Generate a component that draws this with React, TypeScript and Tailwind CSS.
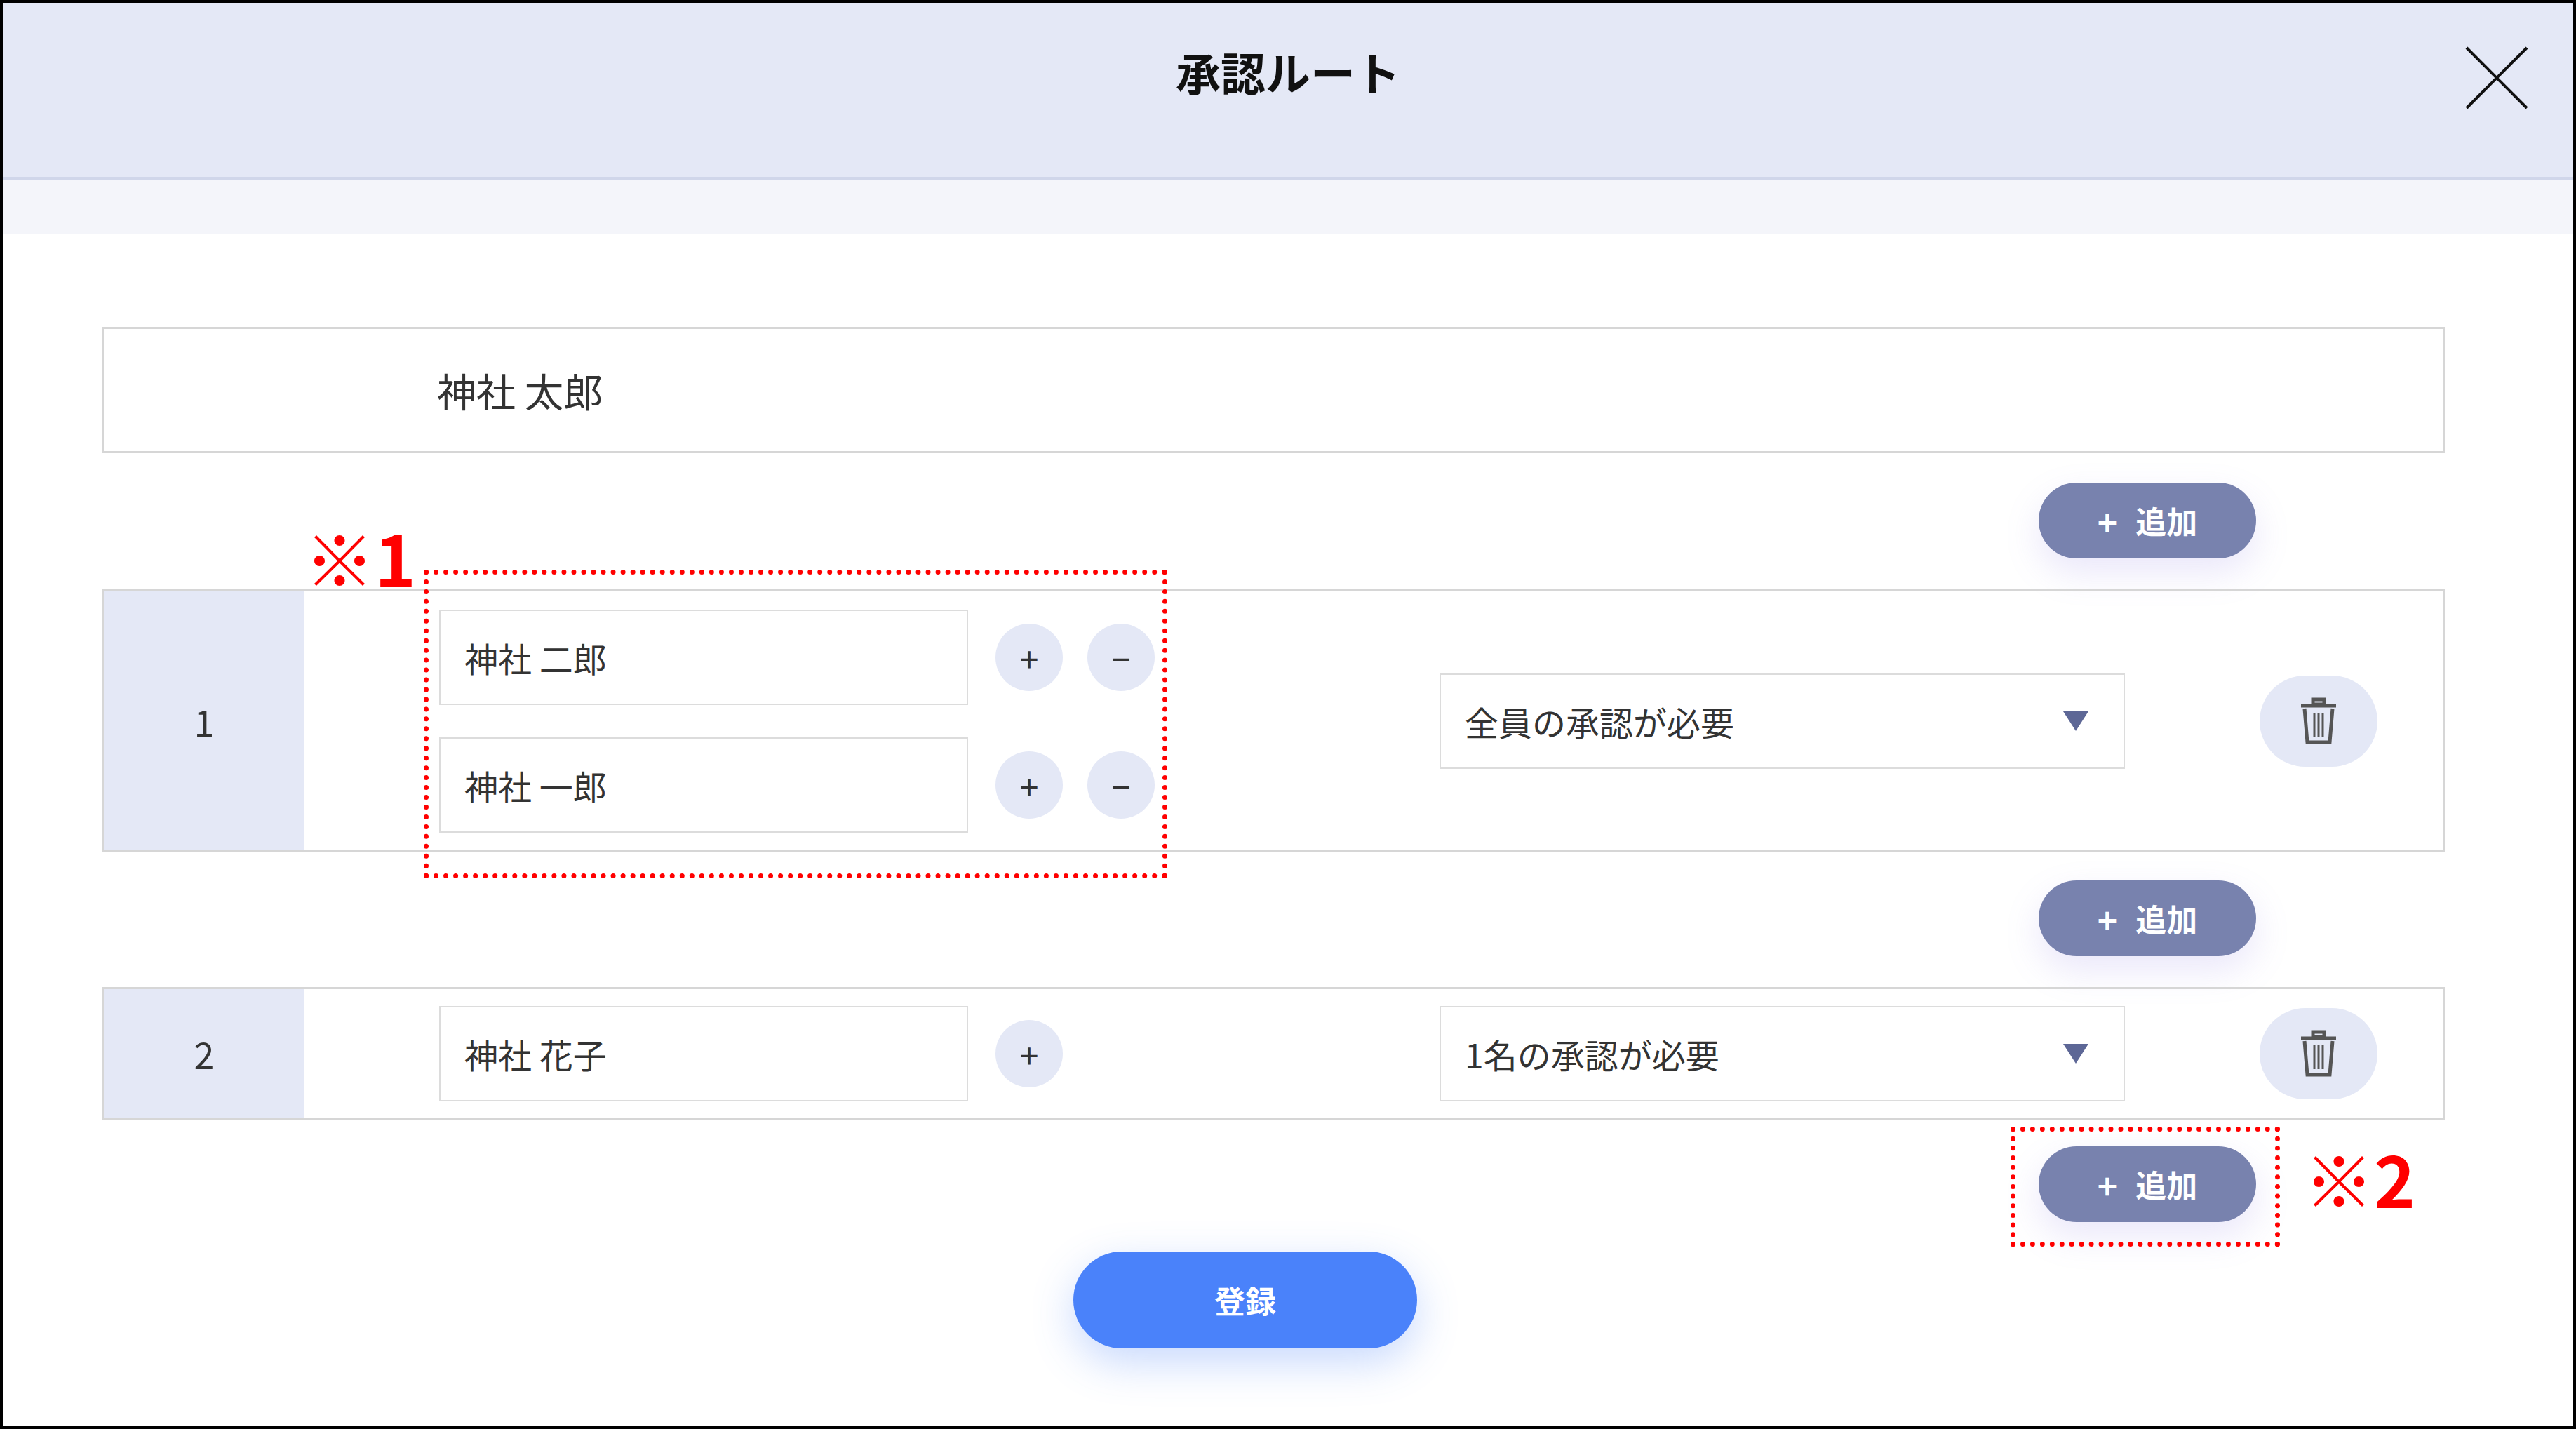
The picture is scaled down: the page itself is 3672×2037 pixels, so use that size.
import React from "react";

const F = { fontFamily: '"Noto Sans CJK JP", "Noto Sans", sans-serif' };

function AddBtn() {
  return (
    <div className="flex justify-end pr-[269px]">
      <div className="w-[310px] h-[108px] rounded-full bg-[#7882ae] text-white font-bold text-[44px] flex items-center justify-center gap-[26px] shadow-[0_20px_50px_rgba(140,120,230,0.18)]">
        <span className="text-[48px]">+</span>
        <span>追加</span>
      </div>
    </div>
  );
}

function Circle({ c }: { c: string }) {
  return (
    <div className="w-[96px] h-[96px] rounded-full bg-[#e4e8f6] flex items-center justify-center text-[48px] text-[#333]">{c}</div>
  );
}

function Input({ t }: { t: string }) {
  return (
    <div className="w-[754px] h-[136px] border-2 border-[#dcdcdc] flex items-center pl-[34px] text-[48px] text-[#333]">{t}</div>
  );
}

function Select({ t }: { t: string }) {
  return (
    <div className="w-[977px] h-[136px] border-2 border-[#dcdcdc] flex items-center pl-[34px] pr-[50px] text-[48px] text-[#333]">
      <span className="flex-1">{t}</span>
      <svg width="36" height="28" viewBox="0 0 36 28"><polygon points="0,0 36,0 18,28" fill="#5d6796" /></svg>
    </div>
  );
}

function Trash() {
  return (
    <div className="w-[168px] h-[130px] rounded-full bg-[#e4e8f6] flex items-center justify-center">
      <svg width="56" height="68" viewBox="0 0 56 68" fill="none" stroke="#555" strokeWidth="5">
        <rect x="20" y="3" width="16" height="7" />
        <line x1="3" y1="12" x2="53" y2="12" />
        <path d="M8 16 L12 64 L44 64 L48 16" />
        <line x1="22" y1="22" x2="22" y2="56" strokeWidth="3" />
        <line x1="28" y1="22" x2="28" y2="56" strokeWidth="3" />
        <line x1="34" y1="22" x2="34" y2="56" strokeWidth="3" />
      </svg>
    </div>
  );
}

export default function App() {
  return (
    <div style={F} className="w-[3672px] h-[2037px] bg-white border-[4px] border-black relative overflow-hidden">
      <div className="h-[253px] bg-[#e4e8f6] border-b-[4px] border-[#d0d6ea] flex items-center justify-center relative">
        <span className="font-bold text-[64px] text-[#111] -mt-[56px]">承認ルート</span>
        <svg className="absolute right-[64px] top-[62px]" width="90" height="90" viewBox="0 0 90 90" stroke="#111" strokeWidth="4">
          <line x1="2" y1="2" x2="88" y2="88" />
          <line x1="88" y1="2" x2="2" y2="88" />
        </svg>
      </div>
      <div className="h-[76px] bg-[#f4f5fa]" />
      <div className="pl-[141px] pr-[183px] pt-[133px] flex flex-col">
        <div className="h-[180px] border-[3px] border-[#d6d6d6] flex items-center pl-[475px] text-[56px] text-[#333]">神社 太郎</div>
        <div className="pt-[42px] pb-[44px]"><AddBtn /></div>
        <div className="h-[375px] border-[3px] border-[#d6d6d6] flex">
          <div className="w-[286px] bg-[#e4e8f6] flex items-center justify-center text-[52px] text-[#333]">1</div>
          <div className="w-[1618px] pl-[192px] flex flex-col justify-center gap-[46px]">
            <div className="flex items-center"><Input t="神社 二郎" /><div className="ml-[39px] flex gap-[35px]"><Circle c="+" /><Circle c="−" /></div></div>
            <div className="flex items-center"><Input t="神社 一郎" /><div className="ml-[39px] flex gap-[35px]"><Circle c="+" /><Circle c="−" /></div></div>
          </div>
          <div className="flex items-center"><Select t="全員の承認が必要" /></div>
          <div className="flex items-center ml-[192px]"><Trash /></div>
        </div>
        <div className="pt-[40px] pb-[44px]"><AddBtn /></div>
        <div className="h-[190px] border-[3px] border-[#d6d6d6] flex">
          <div className="w-[286px] bg-[#e4e8f6] flex items-center justify-center text-[52px] text-[#333]">2</div>
          <div className="w-[1618px] pl-[192px] flex items-center">
            <Input t="神社 花子" /><div className="ml-[39px]"><Circle c="+" /></div>
          </div>
          <div className="flex items-center"><Select t="1名の承認が必要" /></div>
          <div className="flex items-center ml-[192px]"><Trash /></div>
        </div>
        <div className="pt-[37px]"><AddBtn /></div>
        <div className="flex justify-center pt-[42px] pr-[80px]">
          <div className="w-[490px] h-[138px] rounded-full bg-[#4a82fa] text-white font-bold text-[44px] flex items-center justify-center shadow-[0_20px_60px_rgba(74,130,250,0.3)]">登録</div>
        </div>
      </div>
      <div className="absolute left-[600px] top-[808px] w-[1060px] h-[440px] border-[7px] border-dotted border-[#ff0000]" />
      <div className="absolute left-[430px] top-[740px] text-[#ff0000] font-bold text-[100px] leading-none">※1</div>
      <div className="absolute left-[2862px] top-[1602px] w-[384px] h-[171px] border-[7px] border-dotted border-[#ff0000]" />
      <div className="absolute left-[3280px] top-[1625px] text-[#ff0000] font-bold text-[100px] leading-none">※2</div>
    </div>
  );
}
